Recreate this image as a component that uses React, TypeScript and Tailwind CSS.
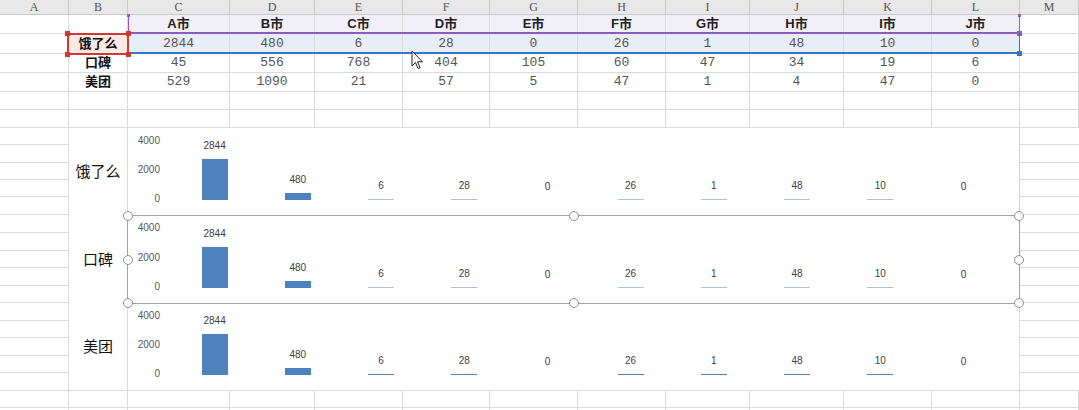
import React from 'react';

const LETTERS = ['A', 'B', 'C', 'D', 'E', 'F', 'G', 'H', 'I', 'J', 'K', 'L', 'M'];
const CITIES = ['A', 'B', 'C', 'D', 'E', 'F', 'G', 'H', 'I', 'J'];

const ROWS = [
  { name: '饿了么', values: [2844, 480, 6, 28, 0, 26, 1, 48, 10, 0] },
  { name: '口碑', values: [45, 556, 768, 404, 105, 60, 47, 34, 19, 6] },
  { name: '美团', values: [529, 1090, 21, 57, 5, 47, 1, 4, 47, 0] },
];

// all three charts point at the 饿了么 row
const CHART_DATA = ROWS[0].values;

const GRID = 'grid grid-cols-[69px_59px_102px_85px_88px_87px_88px_88px_84px_94px_88px_88px_59px]';
const LINE = 'border-[#dadada]';
const CJK = "font-['Liberation_Sans','Noto_Sans_CJK_SC',sans-serif]";
const NUM = "font-['Liberation_Mono',monospace]";

// row boundaries down column A / M next to the charts
const SIDE_ROWS = [17, 18, 17, 17, 18, 18, 18, 17, 18, 17, 18, 17, 18, 17, 18];

function Cell({ className = '', children }: { className?: string; children?: React.ReactNode }) {
  return (
    <div className={`flex items-center justify-center border-r border-b ${LINE} ${className}`}>
      {children}
    </div>
  );
}

function ColumnHeader() {
  return (
    <div className={`${GRID} h-[15px] bg-[#e8e8e8]`}>
      {LETTERS.map((l) => (
        <div
          key={l}
          className="flex items-center justify-center border-r border-b border-[#c9c9c9] font-['Liberation_Serif',serif] text-[12px] leading-[14px] text-[#555]"
        >
          {l}
        </div>
      ))}
    </div>
  );
}

function DataTable() {
  return (
    <div className={GRID}>
      {/* row 1 */}
      <Cell className="h-[19px]" />
      <Cell className="h-[19px]" />
      {CITIES.map((c) => (
        <Cell key={c} className={`h-[19px] bg-[#f1eff7] ${CJK} text-[13px] font-bold text-[#222]`}>
          {c}市
        </Cell>
      ))}
      <Cell className="h-[19px]" />

      {ROWS.map((row, i) => {
        const h = i === 0 ? 'h-[20px]' : 'h-[19px]';
        return (
          <React.Fragment key={row.name}>
            <Cell className={h} />
            <Cell className={`${h} ${i === 0 ? 'bg-[#fbe9e6]' : ''} ${CJK} text-[13px] font-bold text-[#111]`}>
              {row.name}
            </Cell>
            {row.values.map((v, j) => (
              <Cell key={j} className={`${h} ${i === 0 ? 'bg-[#e8eef8]' : ''} ${NUM} text-[13px] text-[#555]`}>
                {v}
              </Cell>
            ))}
            <Cell className={h} />
          </React.Fragment>
        );
      })}

      {/* two empty rows */}
      {LETTERS.map((l) => (
        <Cell key={'e1' + l} className="h-[18px]" />
      ))}
      {LETTERS.map((l) => (
        <Cell key={'e2' + l} className="h-[18px]" />
      ))}
    </div>
  );
}

function SideColumn({ width, right }: { width: string; right: boolean }) {
  return (
    <div className={`flex flex-col ${width}`}>
      {SIDE_ROWS.map((h, i) => (
        <div
          key={i}
          className={`border-b ${right ? 'border-r' : ''} ${LINE}`}
          style={{ height: h }}
        />
      ))}
    </div>
  );
}

function Handle({ className }: { className: string }) {
  return (
    <div
      className={`absolute h-[10px] w-[10px] rounded-full border-[1.5px] border-[#8f8f8f] bg-white ${className}`}
    />
  );
}

interface ChartProps {
  label: string;
  height: string;
  selected?: boolean;
  last?: boolean;
  thinColor: string;
}

function Chart({ label, height, selected, last, thinColor }: ChartProps) {
  return (
    <div className={`flex ${height}`}>
      <div className={`flex w-[59px] items-center justify-center border-r ${LINE} ${last ? 'border-b' : ''}`}>
        <span className="font-['Noto_Sans_CJK_SC',sans-serif] text-[15px] text-[#111]">{label}</span>
      </div>
      <div className={`relative flex w-[892px] border-r border-[#d2d2d2] bg-white ${last ? `border-b ${LINE}` : ''}`}>
        <div className="flex w-[45px] flex-col items-end justify-between pt-[7px] pb-[10px] pr-[13px] font-['Liberation_Sans',sans-serif] text-[10px] leading-[12px] text-[#595959]">
          <span>4000</span>
          <span>2000</span>
          <span>0</span>
        </div>
        <div className="flex flex-1 pr-[14px] pb-[15px]">
          {CHART_DATA.map((v, i) => {
            const h = v === 0 ? 0 : Math.max(1, Math.round((v / 4000) * 58));
            return (
              <div key={i} className="flex flex-1 flex-col items-center justify-end">
                <span className="mb-[7px] font-['Liberation_Sans',sans-serif] text-[10px] leading-[12px] text-[#404040]">
                  {v}
                </span>
                <div
                  className="w-[26px]"
                  style={{ height: h, backgroundColor: h <= 1 ? thinColor : '#4f81bd' }}
                />
              </div>
            );
          })}
        </div>

        {selected && (
          <div className="absolute top-0 -left-px -right-px -bottom-px z-10 border border-[#a3a3a3]">
            <Handle className="top-0 left-0 -translate-x-1/2 -translate-y-1/2" />
            <Handle className="top-0 left-1/2 -translate-x-1/2 -translate-y-1/2" />
            <Handle className="top-0 right-0 translate-x-1/2 -translate-y-1/2" />
            <Handle className="top-1/2 left-0 -translate-x-1/2 -translate-y-1/2" />
            <Handle className="top-1/2 right-0 translate-x-1/2 -translate-y-1/2" />
            <Handle className="bottom-0 left-0 -translate-x-1/2 translate-y-1/2" />
            <Handle className="bottom-0 left-1/2 -translate-x-1/2 translate-y-1/2" />
            <Handle className="bottom-0 right-0 translate-x-1/2 translate-y-1/2" />
          </div>
        )}
      </div>
    </div>
  );
}

function RangeMarks() {
  return (
    <>
      {/* purple: header range */}
      <div className="absolute top-[15px] left-[128px] h-[19px] w-px bg-[#8a5cc2]" />
      <div className="absolute top-[14px] left-[127px] h-[3px] w-[3px] bg-[#8a5cc2]" />
      <div className="absolute top-[32px] left-[128px] h-[2px] w-[893px] bg-[#8a5cc2]" />
      <div className="absolute top-[15px] left-[1019px] h-[19px] w-px bg-[#8a5cc2]" />
      <div className="absolute top-[14px] left-[1018px] h-[3px] w-[3px] bg-[#8a5cc2]" />
      <div className="absolute top-[31px] left-[1017px] h-[5px] w-[5px] bg-[#8a5cc2]" />

      {/* blue: data range */}
      <div className="absolute top-[52px] left-[128px] h-[2px] w-[893px] bg-[#3a74c6]" />
      <div className="absolute top-[34px] left-[1019px] h-[19px] w-px bg-[#3a74c6]" />
      <div className="absolute top-[51px] left-[1017px] h-[5px] w-[5px] bg-[#3a74c6]" />

      {/* red: name cell */}
      <div className="absolute top-[33px] left-[67px] h-[22px] w-[62px] border-2 border-[#cc3a33]" />
      <div className="absolute top-[31px] left-[65px] h-[5px] w-[5px] bg-[#cc3a33]" />
      <div className="absolute top-[31px] left-[126px] h-[5px] w-[5px] bg-[#cc3a33]" />
      <div className="absolute top-[52px] left-[65px] h-[5px] w-[5px] bg-[#cc3a33]" />
      <div className="absolute top-[52px] left-[126px] h-[5px] w-[5px] bg-[#cc3a33]" />

      {/* mouse pointer */}
      <svg className="absolute top-[50px] left-[411px]" width="13" height="21" viewBox="0 0 13 21">
        <path
          d="M1 1 L1 16 L4.5 12.5 L7 18.5 L9 17.6 L6.6 11.8 L11.5 11.8 Z"
          fill="#fff"
          stroke="#222"
          strokeWidth="1"
          strokeLinejoin="round"
        />
      </svg>
    </>
  );
}

export default function App() {
  return (
    <div className="relative h-[410px] w-[1079px] overflow-hidden bg-white">
      <ColumnHeader />
      <DataTable />

      <div className="flex">
        <SideColumn width="w-[69px]" right />
        <div className="flex w-[951px] flex-col">
          <Chart label="饿了么" height="h-[87px]" thinColor="#aebfdc" />
          <Chart label="口碑" height="h-[88px]" thinColor="#aebfdc" selected />
          <Chart label="美团" height="h-[88px]" thinColor="#4f81bd" last />
        </div>
        <SideColumn width="w-[59px]" right={false} />
      </div>

      <div className={GRID}>
        {LETTERS.map((l) => (
          <Cell key={'b1' + l} className="h-[17px]" />
        ))}
        {LETTERS.map((l) => (
          <Cell key={'b2' + l} className="h-[17px]" />
        ))}
      </div>

      <RangeMarks />
    </div>
  );
}
